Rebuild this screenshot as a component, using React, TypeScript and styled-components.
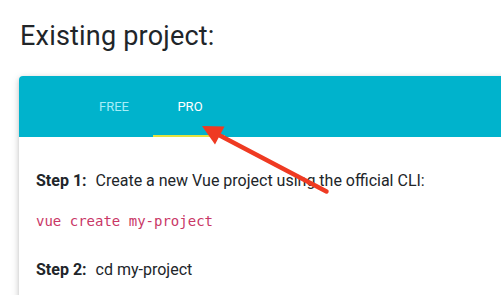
import React from "react";
import styled, { createGlobalStyle } from "styled-components";

const GlobalStyle = createGlobalStyle`
  html, body {
    margin: 0;
    padding: 0;
    background: #ffffff;
    overflow: hidden;
  }
  body {
    font-family: Roboto, "Liberation Sans", Arial, sans-serif;
    color: #212529;
  }
`;

const Page = styled.div`
  position: relative;
  width: 501px;
  height: 295px;
  padding: 20px 0 0 19px;
  box-sizing: border-box;
  overflow: hidden;
`;

const Heading = styled.h2`
  margin: 0 0 24px 1px;
  font-size: 27px;
  font-weight: 400;
  line-height: 32px;
  letter-spacing: 0.2px;
  color: #212529;
`;

const Card = styled.div`
  width: 520px;
  border-radius: 4px 4px 0 0;
  background: #ffffff;
  box-shadow: 0 2px 5px rgba(0, 0, 0, 0.16), 0 2px 10px rgba(0, 0, 0, 0.12);
`;

const TabBar = styled.div`
  display: flex;
  height: 61px;
  padding-left: 57px;
  background: #00b3cc;
  border-radius: 4px 4px 0 0;
`;

const Tab = styled.div<{ $active?: boolean }>`
  position: relative;
  width: 76px;
  display: flex;
  align-items: center;
  justify-content: center;
  font-size: 13px;
  color: ${(p) => (p.$active ? "#ffffff" : "#a6eef8")};
  &::after {
    content: "";
    display: ${(p) => (p.$active ? "block" : "none")};
    position: absolute;
    left: 1px;
    right: 3px;
    bottom: 0;
    height: 2px;
    background: #e2e33f;
  }
`;

const Body = styled.div`
  padding: 32px 17px 30px 17px;
`;

const Line = styled.p`
  margin: 0;
  font-size: 16px;
  line-height: 24px;
  color: #212529;
`;

const Label = styled.strong`
  font-weight: 700;
  margin-right: 5px;
`;

const Code = styled.code`
  display: block;
  margin: 18px 0 26px 0;
  font-family: "DejaVu Sans Mono", "Liberation Mono", monospace;
  font-size: 14px;
  line-height: 21px;
  color: #c93766;
`;

const ArrowLayer = styled.svg`
  position: absolute;
  left: 0;
  top: 0;
  pointer-events: none;
`;

export default function App() {
  return (
    <>
      <GlobalStyle />
      <Page>
        <Heading>Existing project:</Heading>
        <Card>
          <TabBar>
            <Tab>FREE</Tab>
            <Tab $active>PRO</Tab>
          </TabBar>
          <Body>
            <Line>
              <Label>Step 1:</Label> Create a new Vue project using the official CLI:
            </Line>
            <Code>vue create my-project</Code>
            <Line>
              <Label>Step 2:</Label> cd my-project
            </Line>
          </Body>
        </Card>
        <ArrowLayer width="501" height="295" viewBox="0 0 501 295">
          <line
            x1="326.5"
            y1="191.5"
            x2="216"
            y2="133.5"
            stroke="#ef3a22"
            strokeWidth="4.5"
            strokeLinecap="round"
          />
          <polygon points="202,126 224.5,126.5 215,144.5" fill="#ef3a22" />
        </ArrowLayer>
      </Page>
    </>
  );
}
